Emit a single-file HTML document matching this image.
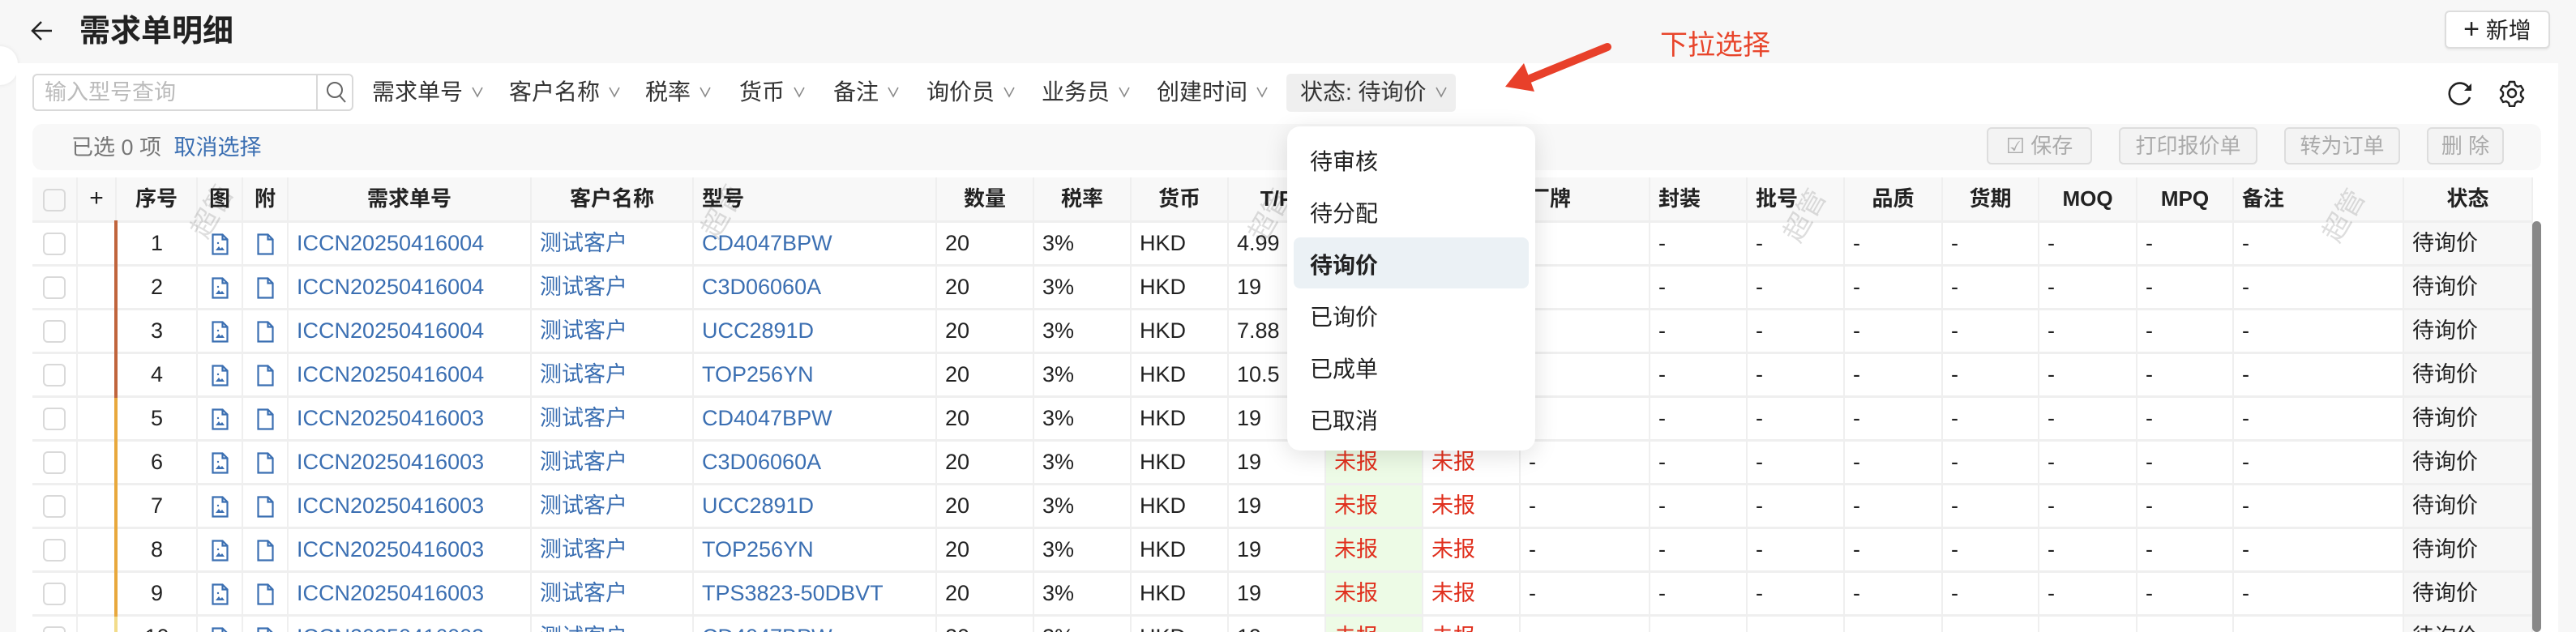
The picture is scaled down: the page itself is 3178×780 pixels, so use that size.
<!DOCTYPE html>
<html><head><meta charset="utf-8"><style>
*{box-sizing:border-box;margin:0;padding:0}
html,body{width:3178px;height:780px;overflow:hidden}
body{background:#f7f7f7;font-family:"Liberation Sans","Noto Sans CJK SC",sans-serif;color:#222;position:relative}
.abs{position:absolute}
.card{left:20px;top:78px;width:3136px;height:702px;background:#fff}
.f{position:absolute;top:96px;font-size:28px;line-height:36px;color:#333;white-space:nowrap}
.chev{display:inline-block;width:16px;height:16px;vertical-align:middle;margin-left:10px;position:relative;top:-3px}
table{position:absolute;left:40px;top:219px;border-collapse:collapse;table-layout:fixed;font-size:27px}
td,th{border-right:2px solid #efefef;border-bottom:3px solid #efefef;height:54px;padding:0 10px;white-space:nowrap;overflow:hidden;line-height:30px}
th{background:#f8f8f8;font-weight:bold;font-size:26px;color:#222}
td{color:#222}
.c{text-align:center}.l{text-align:left}
.b{color:#3b6fb2}
.r{color:#e0301e}
.g{background:#edfbe6}
.st{background:#f7f7f7}
.cb{display:inline-block;width:28px;height:28px;border:2px solid #d9d9d9;border-radius:6px;vertical-align:middle}
.btn{position:absolute;top:157px;height:46px;border:2px solid #ddd;border-radius:6px;background:#f3f3f3;color:#aaa;font-size:26px;line-height:42px;text-align:center}
.dd{left:1588px;top:156px;width:306px;height:400px;background:#fff;border-radius:16px;box-shadow:0 6px 30px rgba(0,0,0,.12)}
.di{position:absolute;left:28px;font-size:28px;color:#222}
.wm{position:absolute;color:rgba(0,0,0,.13);font-size:34px;transform:rotate(-60deg)}
</style></head><body>
<div class="abs" style="left:-22px;top:57px;width:44px;height:48px;border-radius:24px;background:#fff;box-shadow:0 0 6px rgba(0,0,0,.08)"></div>
<svg class="abs" style="left:36px;top:22px" width="32" height="32" viewBox="0 0 32 32"><path d="M28 16H5M15 5L4 16l11 11" fill="none" stroke="#222" stroke-width="2.5"/></svg>
<div class="abs" style="left:98px;top:14px;font-size:38px;font-weight:bold;line-height:50px">需求单明细</div>
<div class="abs card"></div>
<div class="abs" style="left:2048px;top:34px;font-size:34px;color:#e8452b;line-height:44px">下拉选择</div>
<svg class="abs" style="left:0;top:0" width="3178" height="200"><path d="M1983 58 L1885 98" stroke="#e8402a" stroke-width="10" stroke-linecap="round"/><path d="M1857 107 L1880 78 L1893 113Z" fill="#e8402a"/></svg>
<div class="abs" style="left:3016px;top:13px;width:130px;height:47px;border:2px solid #ddd;border-radius:6px;background:#fff;font-size:28px;line-height:43px;text-align:center;box-shadow:0 2px 2px rgba(0,0,0,.05)"><span style="font-size:34px;font-weight:300">+</span> 新增</div>
<div class="abs" style="left:40px;top:91px;width:396px;height:46px;border:2px solid #d9d9d9;border-radius:6px;background:#fff"></div>
<div class="abs" style="left:390px;top:91px;width:2px;height:46px;background:#d9d9d9"></div>
<div class="abs" style="left:55px;top:96px;font-size:27px;color:#bbb;line-height:36px">输入型号查询</div>
<svg class="abs" style="left:400px;top:98px" width="30" height="32" viewBox="0 0 30 32"><circle cx="13" cy="13" r="9" fill="none" stroke="#666" stroke-width="2"/><path d="M19 20l7 8" stroke="#666" stroke-width="2"/></svg>
<div class="f" style="left:459px">需求单号<svg class="chev" viewBox="0 0 16 16"><path d="M2 3l6 11 6-11" fill="none" stroke="#888" stroke-width="1.6"/></svg></div>
<div class="f" style="left:628px">客户名称<svg class="chev" viewBox="0 0 16 16"><path d="M2 3l6 11 6-11" fill="none" stroke="#888" stroke-width="1.6"/></svg></div>
<div class="f" style="left:796px">税率<svg class="chev" viewBox="0 0 16 16"><path d="M2 3l6 11 6-11" fill="none" stroke="#888" stroke-width="1.6"/></svg></div>
<div class="f" style="left:912px">货币<svg class="chev" viewBox="0 0 16 16"><path d="M2 3l6 11 6-11" fill="none" stroke="#888" stroke-width="1.6"/></svg></div>
<div class="f" style="left:1028px">备注<svg class="chev" viewBox="0 0 16 16"><path d="M2 3l6 11 6-11" fill="none" stroke="#888" stroke-width="1.6"/></svg></div>
<div class="f" style="left:1143px">询价员<svg class="chev" viewBox="0 0 16 16"><path d="M2 3l6 11 6-11" fill="none" stroke="#888" stroke-width="1.6"/></svg></div>
<div class="f" style="left:1285px">业务员<svg class="chev" viewBox="0 0 16 16"><path d="M2 3l6 11 6-11" fill="none" stroke="#888" stroke-width="1.6"/></svg></div>
<div class="f" style="left:1427px">创建时间<svg class="chev" viewBox="0 0 16 16"><path d="M2 3l6 11 6-11" fill="none" stroke="#888" stroke-width="1.6"/></svg></div>
<div class="abs" style="left:1587px;top:91px;width:209px;height:47px;background:#efefef;border-radius:5px"></div>
<div class="f" style="left:1604px">状态: 待询价<svg class="chev" viewBox="0 0 16 16"><path d="M2 3l6 11 6-11" fill="none" stroke="#888" stroke-width="1.6"/></svg></div>
<svg class="abs" style="left:3018px;top:98px" width="34" height="34" viewBox="0 0 34 34"><path d="M28 11A13 13 0 1 0 29 22" fill="none" stroke="#222" stroke-width="2.6"/><path d="M31 5L31 14L22 14Z" fill="#222"/></svg>
<svg class="abs" style="left:3082px;top:98px" width="34" height="34" viewBox="0 0 34 34"><path d="M14 3h6l1 4 3 2 4-1 3 5-3 3v4l3 3-3 5-4-1-3 2-1 4h-6l-1-4-3-2-4 1-3-5 3-3v-4l-3-3 3-5 4 1 3-2z" fill="none" stroke="#222" stroke-width="2.4" stroke-linejoin="round"/><circle cx="17" cy="17" r="5" fill="none" stroke="#222" stroke-width="2.4"/></svg>
<div class="abs" style="left:40px;top:153px;width:3095px;height:57px;background:#f8f8f8;border-radius:12px"></div>
<div class="abs" style="left:88px;top:164px;font-size:27px;line-height:36px;color:#777">已选 0 项 <span class="b" style="margin-left:8px">取消选择</span></div>
<div class="btn" style="left:2451px;width:130px">☑ 保存</div>
<div class="btn" style="left:2614px;width:171px">打印报价单</div>
<div class="btn" style="left:2818px;width:143px">转为订单</div>
<div class="btn" style="left:2994px;width:95px">删 除</div>
<table>
<colgroup><col style="width:55px"><col style="width:48px"><col style="width:100px"><col style="width:56px"><col style="width:56px"><col style="width:300px"><col style="width:200px"><col style="width:300px"><col style="width:120px"><col style="width:120px"><col style="width:120px"><col style="width:120px"><col style="width:120px"><col style="width:120px"><col style="width:160px"><col style="width:120px"><col style="width:120px"><col style="width:121px"><col style="width:119px"><col style="width:121px"><col style="width:119px"><col style="width:210px"><col style="width:159px"></colgroup>
<tr><th class="c"><span class="cb"></span></th><th class="c" style="font-weight:normal;font-size:30px">+</th><th class="c">序号</th><th class="c">图</th><th class="c">附</th><th class="c">需求单号</th><th class="c">客户名称</th><th class="l">型号</th><th class="c">数量</th><th class="c">税率</th><th class="c">货币</th><th class="c">T/P</th><th class="c">报价</th><th class="c">报价</th><th class="l">厂牌</th><th class="l">封装</th><th class="l">批号</th><th class="c">品质</th><th class="c">货期</th><th class="c">MOQ</th><th class="c">MPQ</th><th class="l">备注</th><th class="c">状态</th></tr>
<tbody id="tb"></tbody>
</table>
<script>
var rows=[["1","004","CD4047BPW","4.99"],["2","004","C3D06060A","19"],["3","004","UCC2891D","7.88"],["4","004","TOP256YN","10.5"],["5","003","CD4047BPW","19"],["6","003","C3D06060A","19"],["7","003","UCC2891D","19"],["8","003","TOP256YN","19"],["9","003","TPS3823-50DBVT","19"],["10","003","CD4047BPW","19"]];
var img='<svg width="21" height="27" viewBox="0 0 21 27" style="vertical-align:middle"><path d="M1.5 1.5h12l6 6v18h-18z M13.5 1.5v6h6" fill="none" stroke="#3b6fb2" stroke-width="2.2"/><path d="M5 21l4-5 2 3 2-2 3 4z" fill="#3b6fb2"/><circle cx="8" cy="12" r="1.2" fill="#3b6fb2"/></svg>';
var doc='<svg width="21" height="27" viewBox="0 0 21 27" style="vertical-align:middle"><path d="M1.5 1.5h12l6 6v18h-18z M13.5 1.5v6h6" fill="none" stroke="#3b6fb2" stroke-width="2.2"/></svg>';
var h='';
rows.forEach(function(r){var col=r[1]=="004"?"#c0643c":"#e8a83c";if(r[0]=="10")col="#f2dc8a";
h+='<tr><td class="c"><span class="cb"></span></td><td style="border-right:4px solid '+col+'"></td><td class="c">'+r[0]+'</td><td class="c">'+img+'</td><td class="c">'+doc+'</td><td class="b">ICCN20250416'+r[1]+'</td><td class="b">测试客户</td><td class="b">'+r[2]+'</td><td>20</td><td>3%</td><td>HKD</td><td>'+r[3]+'</td><td class="g r">未报</td><td class="r">未报</td><td>-</td><td>-</td><td>-</td><td>-</td><td>-</td><td>-</td><td>-</td><td>-</td><td class="st">待询价</td></tr>';});
document.getElementById('tb').innerHTML=h;
</script>
<div class="abs" style="left:3124px;top:273px;width:11px;height:507px;background:#888;border-radius:6px"></div>
<div class="wm" style="left:225px;top:235px">超管</div>
<div class="wm" style="left:855px;top:235px">超管</div>
<div class="wm" style="left:1530px;top:240px">超管</div>
<div class="wm" style="left:2190px;top:240px">超管</div>
<div class="wm" style="left:2855px;top:240px">超管</div>
<div class="abs dd">
<div class="di" style="top:22px">待审核</div>
<div class="di" style="top:86px">待分配</div>
<div class="abs" style="left:8px;top:137px;width:290px;height:63px;background:#ebf1f5;border-radius:8px"></div>
<div class="di" style="top:150px;font-weight:bold">待询价</div>
<div class="di" style="top:214px">已询价</div>
<div class="di" style="top:278px">已成单</div>
<div class="di" style="top:342px">已取消</div>
</div>
</body></html>
